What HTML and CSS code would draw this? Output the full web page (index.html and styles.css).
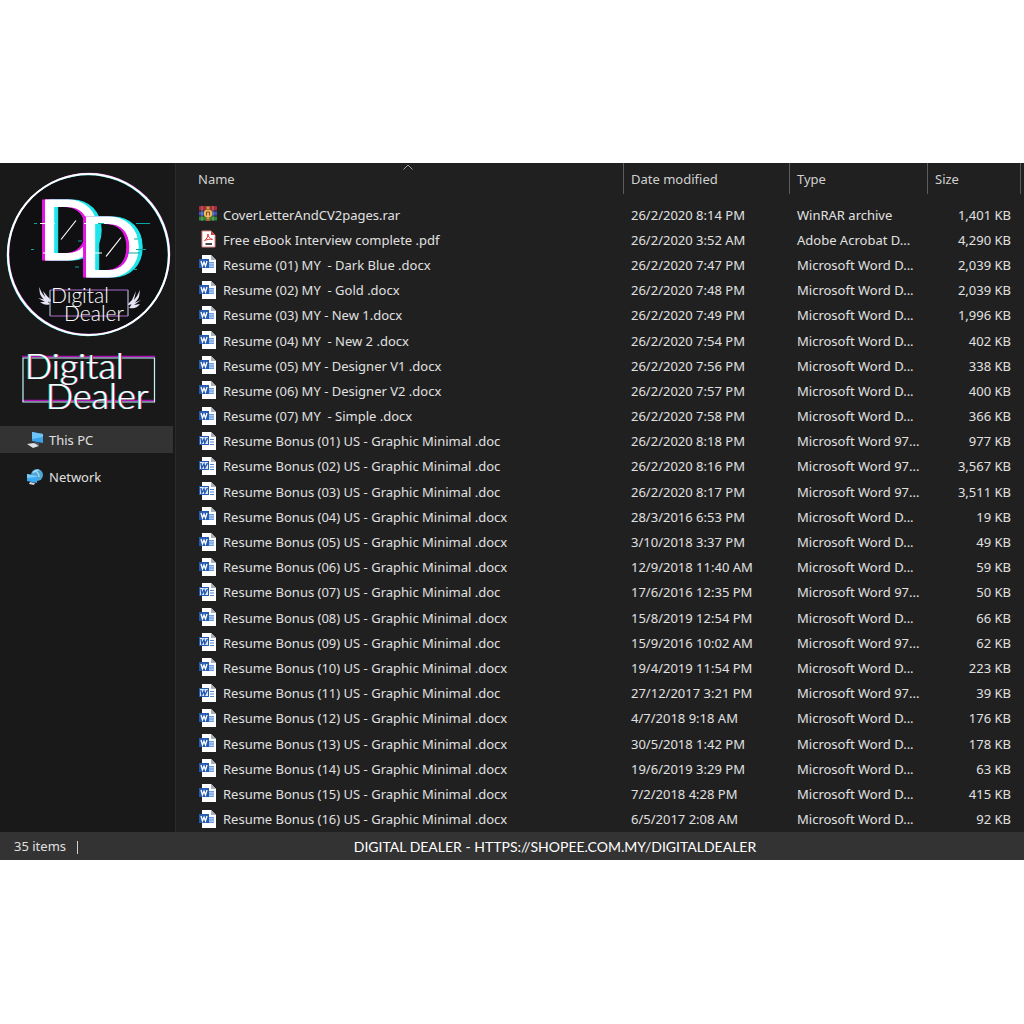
FILE: index.html
```
<!DOCTYPE html>
<html lang="en">
<head>
    <meta charset="UTF-8">
    <title>Digital Dealer</title>
    <link rel="stylesheet" href="styles.css">
</head>
<body>
<!-- file icons -->
<svg class="defs" width="0" height="0">
    <symbol id="ic-rar" viewBox="0 0 18 18">
        <rect x="0" y="1" width="18" height="5" fill="#a52c3c"/>
        <rect x="0" y="6" width="18" height="5" fill="#3e58b8"/>
        <rect x="0" y="11" width="18" height="5" fill="#2f8a35"/>
        <path d="M0 6h18M0 11h18M0 16h18" stroke="#1b1b2b"/>
        <path d="M3 1v15M14 1v15" stroke="#d9c9a0" stroke-opacity=".5"/>
        <rect x="7" y="1" width="4" height="15" fill="#a8642a"/>
        <rect x="5" y="5" width="8" height="7" rx="2" fill="#f0b860"/>
        <path d="M7.500 10.500V7h3v3.500" fill="none" stroke="#7a4a20"/>
        <path d="M8 3h2M8 13h2" stroke="#f4d27a"/>
    </symbol>
    <symbol id="ic-pdf" viewBox="0 0 18 18">
        <path d="M3 1h9l4 4v12H3z" fill="#fff" stroke="#e08a8a"/>
        <path d="M12 1v4h4z" fill="#d9383a"/>
        <path d="M5.500 10.500c2-1 3.500-4 3.500-6.500 0 2.500 1.500 4.500 4.500 5.500-3-.5-5.500 0-8 1z" fill="none" stroke="#e0383a"/>
        <path d="M6.500 14h6.500" stroke="#444" stroke-width="2"/>
    </symbol>
    <symbol id="ic-docx" viewBox="0 0 18 18">
        <path d="M3 0h9l5 5v13H3z" fill="#fff"/>
        <path d="M12 0v5h5z" fill="#a9b0ba"/>
        <rect x="10" y="7" width="5" height="6" fill="#a9c8f0"/>
        <path d="M10 7.500h5M10 10h5M10 12.500h5" stroke="#6d9be0"/>
        <rect x="0" y="4" width="10" height="9" fill="#2459b0"/>
        <path d="M2 6l1.500 5L5 7l1.500 4L8 6" fill="none" stroke="#fff" stroke-width="1.300"/>
    </symbol>
    <symbol id="ic-doc" viewBox="0 0 18 18">
        <path d="M3 0h9l5 5v13H3z" fill="#fff"/>
        <path d="M12 0v5h5z" fill="#a9b0ba"/>
        <path d="M11 7.500h4M11 10h4M11 12.500h4" stroke="#4f86d8"/>
        <rect x=".5" y="4.500" width="9" height="8" fill="#dbe7fa" stroke="#2459b0"/>
        <path d="M2 6l.8 5L5 7l.8 4L8.500 6" fill="none" stroke="#2459b0" stroke-width="1.400"/>
    </symbol>
</svg>

<div class="explorer">
    <aside class="sidebar">
        <svg class="logo" viewBox="0 163 176 178" role="img" aria-label="Digital Dealer logo">
            <circle cx="88" cy="254.500" r="80.500" fill="#101012"/>
            <circle cx="89" cy="254" r="80.500" fill="none" stroke="#d36be0" stroke-width="1.500"/>
            <circle cx="88" cy="255" r="80.500" fill="none" stroke="#4fe6e6" stroke-width="1.500"/>
            <circle cx="88.500" cy="254.500" r="80.500" fill="none" stroke="#fff" stroke-width="2"/>
            <text class="logo-d" x="38" y="260">D</text>
            <text class="logo-d" x="79" y="277">D</text>
            <path d="M40 223.500h15M84 223.500h14M43 253h6M95 253h7" stroke="#fff"/>
            <path d="M34 223.500h3M98 223.500h6M136 223.500h14M31 249.500h3M78 241h4M134 239h4M136 249.500h10M128 253h12M75 267h4M133 269.500h4" stroke="#0aa5a5"/>
            <path d="M61 239.500L76 220.500M106 256.500L121 237.500" stroke="#fff" stroke-width="1.200"/>
            <!-- antlers -->
            <path d="M50 302c-5 0-8-4-10-8l-1-7 3 6 3 4-2-6 4 5 4 4zM50 304c-4 2-7 0-10-2l5 0-7-4 8 2z" fill="#e8e4f4"/>
            <path d="M128 305c6 0 9-4 11-8l1-7-3 6-3 4 2-9-4 9-4 4zM129 308c5 1 8 0 11-4l-6 1 7-5-9 4z" fill="#e8e4f4"/>
            <path d="M50 290v26M128 290v26" stroke="#c9d4ee"/>
            <path d="M50 290h78M50 316h78" stroke="#a86ac8"/>
            <text class="logo-name" x="51" y="303">Digital</text>
            <text class="logo-name" x="64" y="321">Dealer</text>
        </svg>
        <svg class="wordmark" viewBox="0 341 176 85" role="img" aria-label="Digital Dealer">
            <path d="M22 356.500h133M22 400.500h133" stroke="#b010b8" stroke-width="1.500"/>
            <path d="M23 358h131.500v44H23z" fill="none" stroke="#c4f4f6" stroke-width="1.200"/>
            <text class="wordmark-name" x="25" y="379">Digital</text>
            <text class="wordmark-name" x="46" y="409">Dealer</text>
        </svg>
        <nav class="places">
            <a class="place active" href="#pc">
                <svg width="18" height="18" viewBox="0 0 18 18">
                    <path d="M6 1l11 2v9L6 10z" fill="#38a3ea"/>
                    <path d="M6 1l11 2v3L6 8z" fill="#6cc4f6"/>
                    <path d="M9 11l4 1v2H9z" fill="#557"/>
                    <path d="M1 13l7-1 5 3-6 2z" fill="#dde2e6"/>
                </svg>
                This PC
            </a>
            <a class="place" href="#network">
                <svg width="18" height="18" viewBox="0 0 18 18">
                    <circle cx="11" cy="7" r="6" fill="#4fa6d4"/>
                    <path d="M7 5c2-3 4-3 6-3M9 3c3 1 4 3 4 6" fill="none" stroke="#b9e2f2" stroke-width="1.200"/>
                    <path d="M1 6l10 2v7L1 13z" fill="#3ba8f2"/>
                    <path d="M1 6l10 2v1L1 10z" fill="#7accfa"/>
                    <path d="M4 14l5 1-1 2-5-1z" fill="#cfd6dc"/>
                </svg>
                Network
            </a>
        </nav>
    </aside>

    <main class="files">
        <table class="file-table">
            <colgroup>
                <col>
                <col class="col-date">
                <col class="col-type">
                <col class="col-size">
            </colgroup>
            <thead>
            <tr>
                <th class="sorted">
                    <svg class="caret" width="10" height="6" viewBox="0 0 10 6"><path d="M.5 5.500L5 1l4.500 4.500" fill="none" stroke="#a0a0a0"/></svg>
                    <button type="button">Name</button>
                </th>
                <th><button type="button">Date modified</button></th>
                <th><button type="button">Type</button></th>
                <th><button type="button">Size</button></th>
            </tr>
            </thead>
            <tbody>
            <tr class="spacer"><td colspan="4"></td></tr>
            <tr><td><svg><use href="#ic-rar"/></svg>CoverLetterAndCV2pages.rar</td><td>26/2/2020 8:14 PM</td><td>WinRAR archive</td><td>1,401 KB</td></tr>
            <tr><td><svg><use href="#ic-pdf"/></svg>Free eBook Interview complete .pdf</td><td>26/2/2020 3:52 AM</td><td>Adobe Acrobat D...</td><td>4,290 KB</td></tr>
            <tr><td><svg><use href="#ic-docx"/></svg>Resume (01) MY  - Dark Blue .docx</td><td>26/2/2020 7:47 PM</td><td>Microsoft Word D...</td><td>2,039 KB</td></tr>
            <tr><td><svg><use href="#ic-docx"/></svg>Resume (02) MY  - Gold .docx</td><td>26/2/2020 7:48 PM</td><td>Microsoft Word D...</td><td>2,039 KB</td></tr>
            <tr><td><svg><use href="#ic-docx"/></svg>Resume (03) MY - New 1.docx</td><td>26/2/2020 7:49 PM</td><td>Microsoft Word D...</td><td>1,996 KB</td></tr>
            <tr><td><svg><use href="#ic-docx"/></svg>Resume (04) MY  - New 2 .docx</td><td>26/2/2020 7:54 PM</td><td>Microsoft Word D...</td><td>402 KB</td></tr>
            <tr><td><svg><use href="#ic-docx"/></svg>Resume (05) MY - Designer V1 .docx</td><td>26/2/2020 7:56 PM</td><td>Microsoft Word D...</td><td>338 KB</td></tr>
            <tr><td><svg><use href="#ic-docx"/></svg>Resume (06) MY - Designer V2 .docx</td><td>26/2/2020 7:57 PM</td><td>Microsoft Word D...</td><td>400 KB</td></tr>
            <tr><td><svg><use href="#ic-docx"/></svg>Resume (07) MY  - Simple .docx</td><td>26/2/2020 7:58 PM</td><td>Microsoft Word D...</td><td>366 KB</td></tr>
            <tr><td><svg><use href="#ic-doc"/></svg>Resume Bonus (01) US - Graphic Minimal .doc</td><td>26/2/2020 8:18 PM</td><td>Microsoft Word 97...</td><td>977 KB</td></tr>
            <tr><td><svg><use href="#ic-doc"/></svg>Resume Bonus (02) US - Graphic Minimal .doc</td><td>26/2/2020 8:16 PM</td><td>Microsoft Word 97...</td><td>3,567 KB</td></tr>
            <tr><td><svg><use href="#ic-doc"/></svg>Resume Bonus (03) US - Graphic Minimal .doc</td><td>26/2/2020 8:17 PM</td><td>Microsoft Word 97...</td><td>3,511 KB</td></tr>
            <tr><td><svg><use href="#ic-docx"/></svg>Resume Bonus (04) US - Graphic Minimal .docx</td><td>28/3/2016 6:53 PM</td><td>Microsoft Word D...</td><td>19 KB</td></tr>
            <tr><td><svg><use href="#ic-docx"/></svg>Resume Bonus (05) US - Graphic Minimal .docx</td><td>3/10/2018 3:37 PM</td><td>Microsoft Word D...</td><td>49 KB</td></tr>
            <tr><td><svg><use href="#ic-docx"/></svg>Resume Bonus (06) US - Graphic Minimal .docx</td><td>12/9/2018 11:40 AM</td><td>Microsoft Word D...</td><td>59 KB</td></tr>
            <tr><td><svg><use href="#ic-doc"/></svg>Resume Bonus (07) US - Graphic Minimal .doc</td><td>17/6/2016 12:35 PM</td><td>Microsoft Word 97...</td><td>50 KB</td></tr>
            <tr><td><svg><use href="#ic-docx"/></svg>Resume Bonus (08) US - Graphic Minimal .docx</td><td>15/8/2019 12:54 PM</td><td>Microsoft Word D...</td><td>66 KB</td></tr>
            <tr><td><svg><use href="#ic-doc"/></svg>Resume Bonus (09) US - Graphic Minimal .doc</td><td>15/9/2016 10:02 AM</td><td>Microsoft Word 97...</td><td>62 KB</td></tr>
            <tr><td><svg><use href="#ic-docx"/></svg>Resume Bonus (10) US - Graphic Minimal .docx</td><td>19/4/2019 11:54 PM</td><td>Microsoft Word D...</td><td>223 KB</td></tr>
            <tr><td><svg><use href="#ic-doc"/></svg>Resume Bonus (11) US - Graphic Minimal .doc</td><td>27/12/2017 3:21 PM</td><td>Microsoft Word 97...</td><td>39 KB</td></tr>
            <tr><td><svg><use href="#ic-docx"/></svg>Resume Bonus (12) US - Graphic Minimal .docx</td><td>4/7/2018 9:18 AM</td><td>Microsoft Word D...</td><td>176 KB</td></tr>
            <tr><td><svg><use href="#ic-docx"/></svg>Resume Bonus (13) US - Graphic Minimal .docx</td><td>30/5/2018 1:42 PM</td><td>Microsoft Word D...</td><td>178 KB</td></tr>
            <tr><td><svg><use href="#ic-docx"/></svg>Resume Bonus (14) US - Graphic Minimal .docx</td><td>19/6/2019 3:29 PM</td><td>Microsoft Word D...</td><td>63 KB</td></tr>
            <tr><td><svg><use href="#ic-docx"/></svg>Resume Bonus (15) US - Graphic Minimal .docx</td><td>7/2/2018 4:28 PM</td><td>Microsoft Word D...</td><td>415 KB</td></tr>
            <tr><td><svg><use href="#ic-docx"/></svg>Resume Bonus (16) US - Graphic Minimal .docx</td><td>6/5/2017 2:08 AM</td><td>Microsoft Word D...</td><td>92 KB</td></tr>
            </tbody>
        </table>
    </main>

    <footer class="status">
        <span class="count">35 items</span>
        <span class="shop">DIGITAL DEALER - <a href="#shop">HTTPS://SHOPEE.COM.MY/DIGITALDEALER</a></span>
    </footer>
</div>
</body>
</html>
```
FILE: styles.css
```
*{
    box-sizing: border-box;
}
body{
    margin: 0;
    height: 100vh;
    padding: 163px 0 164px;
    background-color: white;
    font-family: "Noto Sans", "Open Sans", sans-serif;
    font-size: 13px;
    display: flex;
}
.defs{
    position: absolute;
}
a{
    color: inherit;
    text-decoration: none;
}
.explorer{
    flex: 1;
    display: grid;
    grid-template-columns: 176px 1fr;
    grid-template-rows: 1fr 28px;
    background-color: #202020;
    color: #e0e0e0;
}

/* sidebar */
.sidebar{
    background-color: #191919;
    border-right: 1px solid #2b2b2b;
}
.logo,.wordmark{
    display: block;
    width: 176px;
}
.logo text,.wordmark text{
    font-family: Lato, sans-serif;
    fill: white;
}
.logo .logo-d{
    font-size: 83px;
    stroke: white;
    stroke-width: 1px;
    filter: drop-shadow(4px 0 #1fe6ea) drop-shadow(-3px 0 #e416e4);
}
.logo-name{
    font-size: 21px;
    font-weight: 300;
}
.wordmark-name{
    font-size: 36px;
    font-weight: 300;
    filter: drop-shadow(-1px 0 #1fe6ea) drop-shadow(1px 0 #e8304a);
}
.places{
    display: flex;
    flex-direction: column;
    gap: 10px;
}
.place{
    display: flex;
    align-items: center;
    gap: 5px;
    height: 27px;
    margin-right: 2px;
    padding-left: 26px;
}
.place.active{
    background-color: #333;
}

/* file list */
.files{
    display: grid;
    padding-right: 3px;
}
.file-table{
    width: 100%;
    height: 100%;
    table-layout: fixed;
    border-collapse: separate;
    border-spacing: 0;
}
th{
    position: relative;
    height: 31px;
    padding: 0;
    text-align: left;
    border-right: 1px solid #5c5c5c;
}
th button{
    display: block;
    width: 100%;
    padding: 0 7px;
    border: none;
    background: none;
    color: #d0d0d0;
    font: inherit;
    font-weight: normal;
    text-align: left;
}
th.sorted button{
    padding-left: 22px;
}
.col-date{
    width: 166px;
}
.col-type{
    width: 138px;
}
.col-size{
    width: 93px;
}
.caret{
    position: absolute;
    top: 1px;
    left: 227px;
}
td{
    padding: 0 7px;
    line-height: 20px;
    white-space: pre;
}
td:first-child{
    padding-left: 23px;
}
td:last-child{
    padding-right: 10px;
    text-align: right;
}
td svg{
    width: 18px;
    height: 18px;
    margin: -4px 6px 0 0;
    vertical-align: middle;
}
.spacer td{
    height: 8px;
    line-height: 0;
}

/* status bar */
.status{
    grid-column: 1 / 3;
    display: grid;
    grid-template-columns: 176px 1fr;
    align-items: center;
    background-color: #333;
}
.count{
    padding-left: 14px;
}
.count::after{
    content: "";
    display: inline-block;
    width: 1px;
    height: 13px;
    margin-left: 11px;
    vertical-align: middle;
    background-color: #d0d0d0;
}
.shop{
    padding-right: 90px;
    text-align: center;
    color: white;
    font-family: Lato, sans-serif;
    font-size: 14px;
}
```
